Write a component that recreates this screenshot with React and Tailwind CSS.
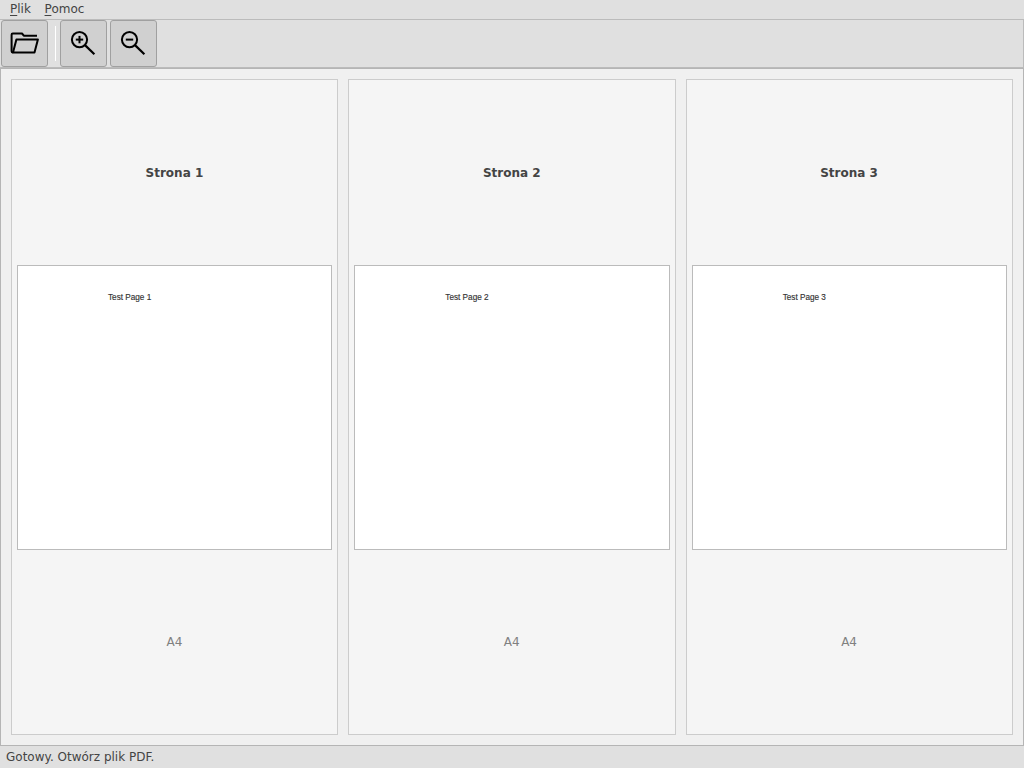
const pages = [1, 2, 3];

function ToolButton({ label, children }) {
  return (
    <button
      aria-label={label}
      className="flex h-[47px] w-[47px] shrink-0 items-center justify-center rounded-[3px] border border-[#a0a0a0] bg-[#d0d0d0]"
    >
      {children}
    </button>
  );
}

function FolderIcon() {
  return (
    <svg width="32" height="32" viewBox="0 0 32 32" fill="none" stroke="#000" strokeWidth="2" strokeLinejoin="round">
      <path d="M28 7.7H14.8L13 5.5H3.8Q2.6 5.5 2.6 6.7V23.3Q2.6 24.6 4.1 24.6" />
      <path d="M7.4 11.6H28.9L25.5 24.6H4Z" />
    </svg>
  );
}

function MagnifierIcon({ plus }) {
  return (
    <svg width="32" height="32" viewBox="0 0 32 32" fill="none" stroke="#000" strokeWidth="2">
      <circle cx="11.5" cy="11.6" r="7.6" />
      <path d="M17 17.1L26.4 26.3" strokeWidth="2.2" />
      <path d="M7.8 11.6H15.2" />
      {plus && <path d="M11.5 7.9V15.3" />}
    </svg>
  );
}

function PageCard({ number }) {
  return (
    <section className="grid min-h-0 grid-rows-[1fr_285px_1fr] gap-[5px] border border-[#cccccc] bg-[#f5f5f5] p-[5px]">
      <h2 className="flex items-center justify-center pt-[2px] pr-[0.5px] font-bold">Strona {number}</h2>
      <div className="border border-[#bbbbbb] bg-white pt-[26px] pl-[90px] font-['Liberation_Sans',sans-serif] text-[8.2px] leading-[11px] text-[#333333] [-webkit-text-stroke:0.15px_#333333]">
        Test Page {number}
      </div>
      <p className="flex items-center justify-center pr-[0.5px] text-[#808080]">A4</p>
    </section>
  );
}

export default function App() {
  return (
    <div className="flex h-screen w-full flex-col overflow-hidden bg-[#e0e0e0] font-['DejaVu_Sans',sans-serif] text-[12px] leading-[14px] text-[#444444]">
      <nav className="flex h-[19px] shrink-0 gap-[13.7px] pt-[2px] pl-[10px]">
        <span><u className="underline-offset-2">P</u>lik</span>
        <span><u className="underline-offset-2">P</u>omoc</span>
      </nav>
      <header className="flex h-[49px] shrink-0 border-y border-r border-[#bbbbbb] pl-px">
        <ToolButton label="Otwórz"><FolderIcon /></ToolButton>
        <div className="mt-[6px] mr-1 ml-[7px] h-[35px] w-px bg-white" />
        <div className="flex gap-[3px]">
          <ToolButton label="Powiększ"><MagnifierIcon plus /></ToolButton>
          <ToolButton label="Pomniejsz"><MagnifierIcon /></ToolButton>
        </div>
      </header>
      <main className="grid min-h-0 flex-1 grid-cols-3 gap-[10px] border border-[#b5b5b5] bg-[#f0f0f0] p-[10px]">
        {pages.map((n) => <PageCard key={n} number={n} />)}
      </main>
      <footer className="h-[22px] shrink-0 pt-[4px] pl-[6px]">Gotowy. Otwórz plik PDF.</footer>
    </div>
  );
}
